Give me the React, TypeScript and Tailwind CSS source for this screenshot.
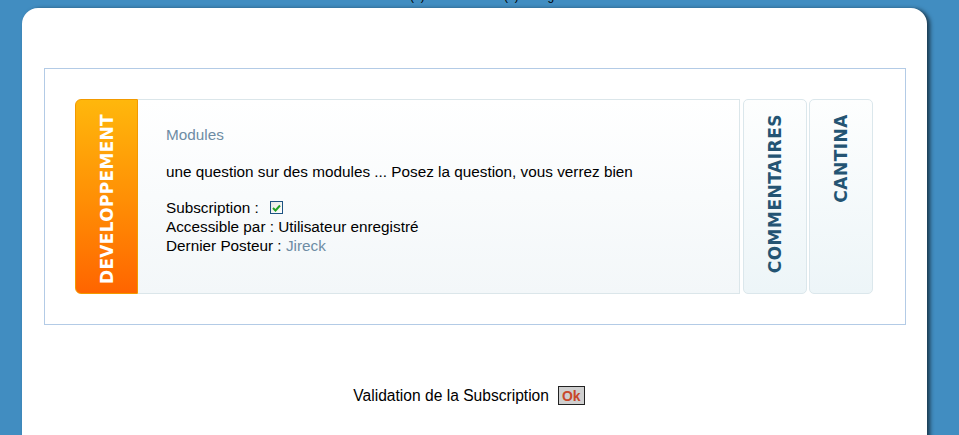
export default function App() {
  return (
    <div className="h-[435px] w-[959px] overflow-hidden bg-[#418dc1] font-['Liberation_Sans',Arial,sans-serif] text-black">
      <div className="h-2 overflow-hidden">
        <div className="-mt-[11px] ml-[410px] flex gap-[14px] text-[12px] leading-[14px]">
          <span>(?) Rechercher</span>
          <span>(?) Enregistrer</span>
        </div>
      </div>
      <div className="ml-[22px] h-[440px] w-[905px] rounded-t-[16px] bg-white pt-[60px] shadow-[3px_1px_4px_rgba(0,0,0,0.6)]">
        <div className="ml-[22px] h-[257px] w-[862px] border border-[#b3cbe6] pl-[30px] pt-[30px]">
          <div className="flex h-[195px]">
            <div className="flex w-[63px] justify-center rounded-l-[6px] border border-[#f29a00] bg-gradient-to-b from-[#ffb70c] to-[#ff6400] pt-[14px]">
              <span className="rotate-180 self-start font-['DejaVu_Sans',sans-serif] text-[17px] font-bold leading-[22px] tracking-[0.3px] text-white [writing-mode:vertical-rl]">
                DEVELOPPEMENT
              </span>
            </div>
            <div className="w-[602px] border border-l-0 border-[#dbe6ea] bg-gradient-to-b from-white to-[#f3f7f9] pl-[28px] pt-[25px] text-[15.3px] leading-[19px]">
              <div className="text-[#6e8ca4]">Modules</div>
              <div className="mt-[18px]">une question sur des modules ... Posez la question, vous verrez bien</div>
              <div className="mt-[17px] flex items-center">
                <span>Subscription :</span>
                <span className="ml-[11px] flex h-[13px] w-[13px] items-center justify-center border border-[#1d5382] bg-gradient-to-br from-[#e8e8e2] to-white">
                  <svg width="9" height="8" viewBox="0 0 9 8">
                    <path d="M1 4 L3.5 6.5 L8 1.5" fill="none" stroke="#21a121" strokeWidth="2" />
                  </svg>
                </span>
              </div>
              <div>Accessible par : Utilisateur enregistré</div>
              <div>
                Dernier Posteur : <span className="text-[#6e8ca4]">Jireck</span>
              </div>
            </div>
            <div className="ml-[3px] flex w-[64px] justify-center rounded-[5px] border border-[#dbe7ec] bg-gradient-to-b from-[#fdfefe] to-[#edf5f8] pt-[14px]">
              <span className="rotate-180 self-start font-['DejaVu_Sans',sans-serif] text-[17px] font-bold leading-[22px] tracking-[0.5px] text-[#245473] [writing-mode:vertical-rl]">
                COMMENTAIRES
              </span>
            </div>
            <div className="ml-[2px] flex w-[64px] justify-center rounded-[5px] border border-[#dbe7ec] bg-gradient-to-b from-[#fdfefe] to-[#edf5f8] pt-[14px]">
              <span className="rotate-180 self-start font-['DejaVu_Sans',sans-serif] text-[17px] font-bold leading-[22px] tracking-[0.5px] text-[#245473] [writing-mode:vertical-rl]">
                CANTINA
              </span>
            </div>
          </div>
        </div>
        <div className="mt-[59px] flex items-center justify-center pr-[11px] text-[15.6px]">
          <span>Validation de la Subscription</span>
          <button className="ml-[9px] h-[19px] border border-[#222] bg-[#cfcfcf] px-[3px] text-[14px] font-bold leading-[16px] text-[#c8472b]">
            Ok
          </button>
        </div>
      </div>
    </div>
  )
}
